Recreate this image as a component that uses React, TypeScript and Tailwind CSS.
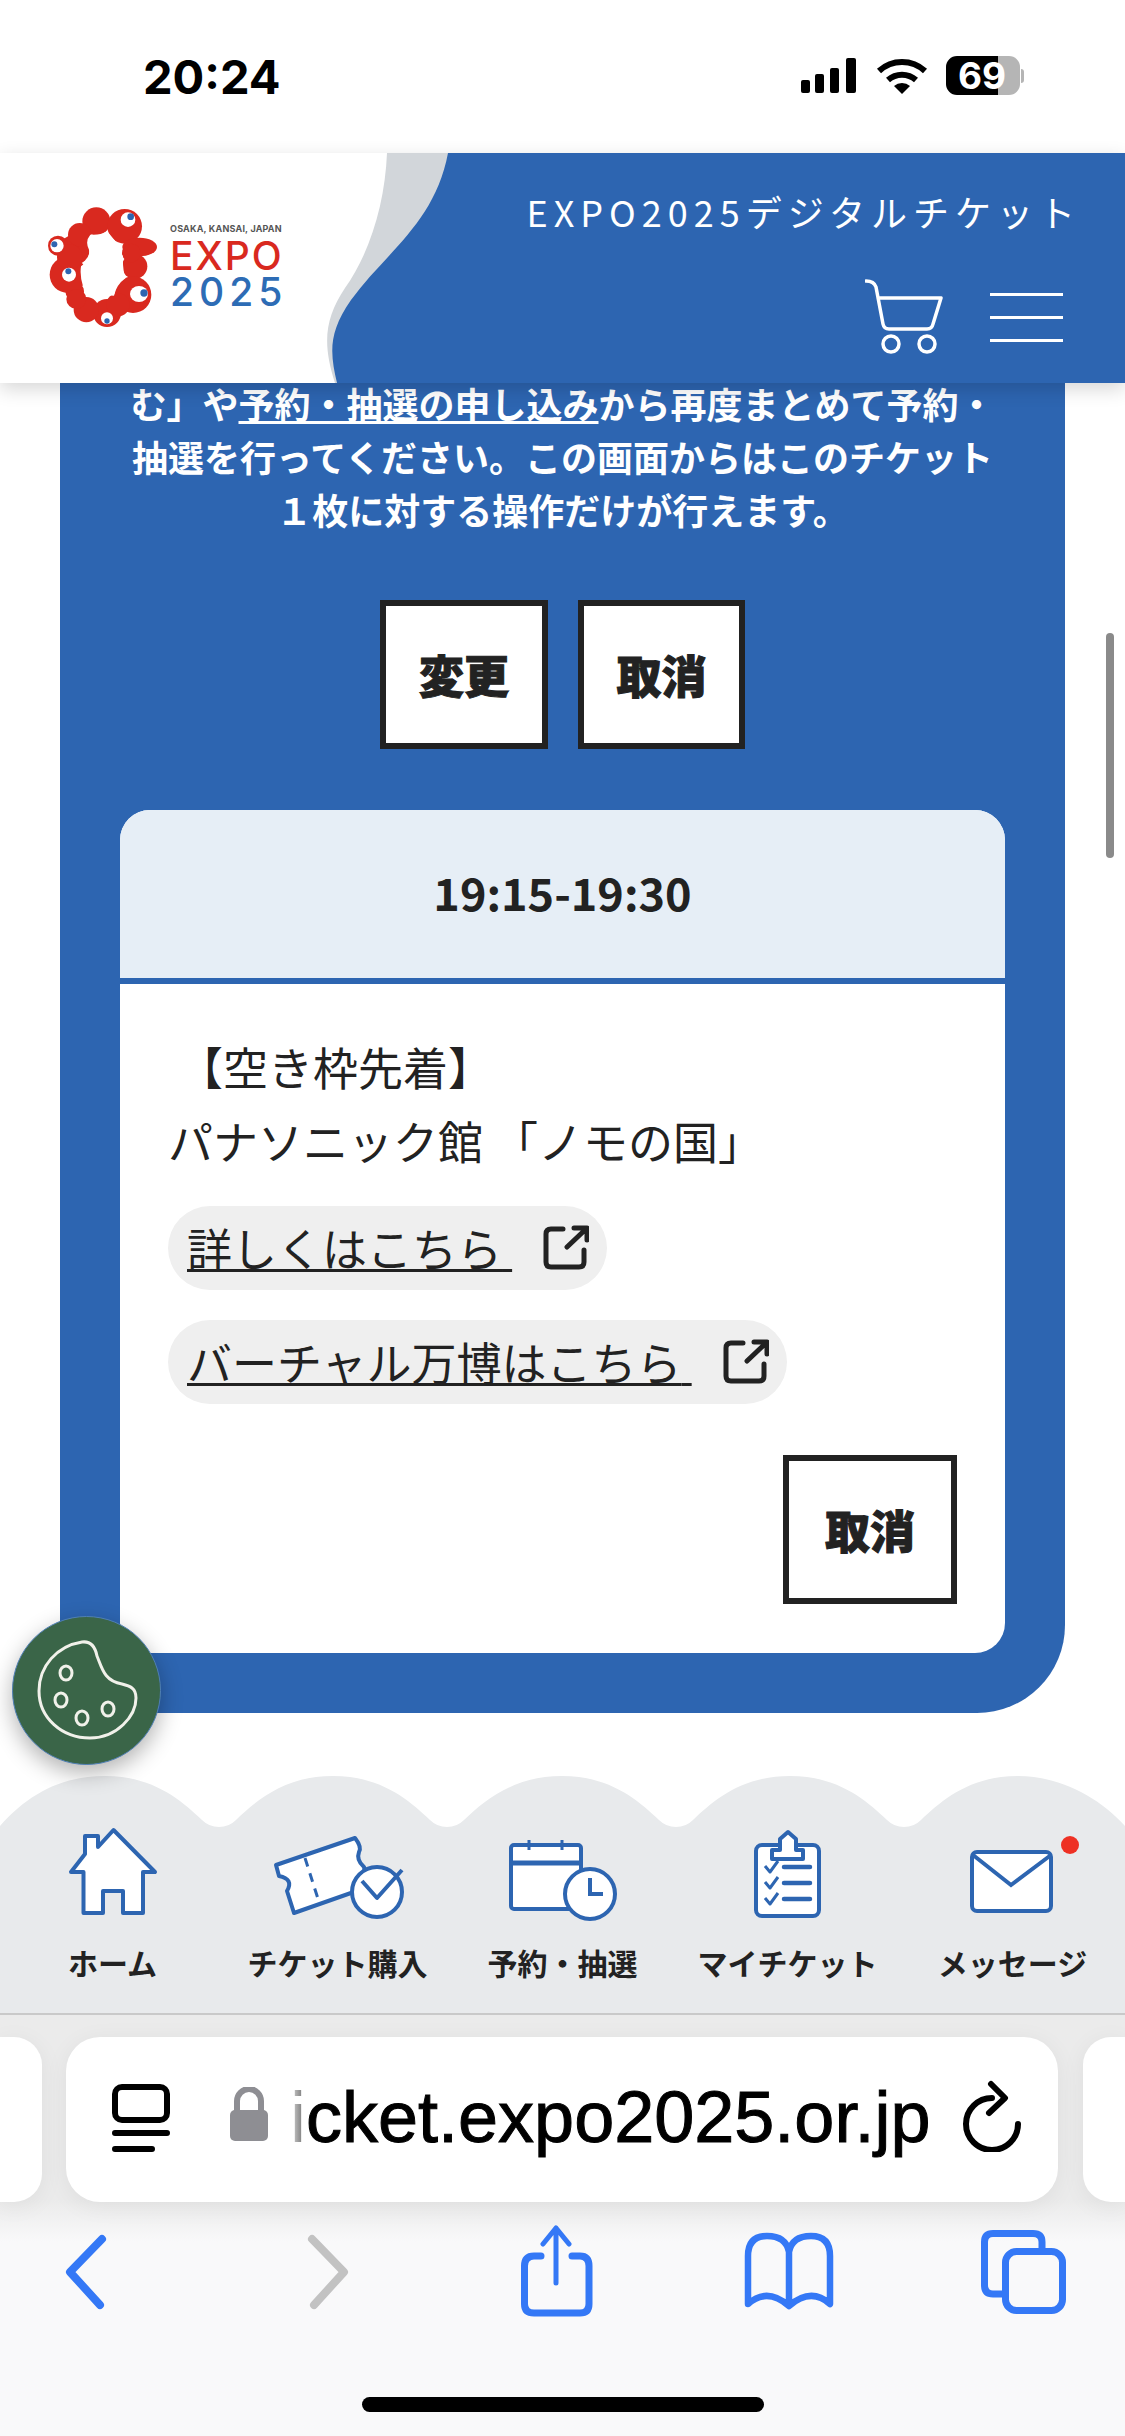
import React from 'react';

const BLUE = '#2d65b1';

const scallopPath = () => {
    const peaks = [105, 333, 562, 790, 1018];
    let d = 'M0 50 C28 18 62 0 105 0 ';
    peaks.forEach((p, i) => {
        const next = peaks[i + 1];
        if (next) {
            d += `C${p + 48} 0 ${p + 76} 24 ${p + 97} 44 Q${p + 104} 51 ${p + 114} 51 Q${p + 124} 51 ${p + 131} 44 C${p + 152} 24 ${next - 48} 0 ${next} 0 `;
        } else {
            d += `C${p + 40} 0 ${p + 80} 20 1125 50 `;
        }
    });
    return d + 'L1125 51 L0 51 Z';
};

const HomeIcon = () => (
    <path d="M75.5 3 L117 45 L105 45 L105 86 L85 86 L85 64 L65 64 L65 86 L45.5 86 L45.5 45 L33 45 L47 27 L47 9 L60 9 L60 20 Z" fill="#fff" stroke={BLUE} strokeWidth="4" strokeLinejoin="round" />
);

const TicketIcon = () => (
    <g fill="none" stroke={BLUE} strokeWidth="4" strokeLinejoin="round">
        <path d="M13 38 L92 11 Q99 20 96 25 Q93 33 101 40 L105 60 L31 86 L24 64 Q31 52 16 49 Z" fill="#fff" />
        <path d="M42 31 L56 75" strokeDasharray="9 7" strokeWidth="3" />
        <circle cx="114" cy="65" r="25" fill="#fff" />
        <path d="M99 54 L114 71 L139 43" />
    </g>
);

const CalendarIcon = () => (
    <g fill="none" stroke={BLUE} strokeWidth="4">
        <rect x="23" y="18" width="70" height="64" rx="3" fill="#fff" />
        <path d="M23 36 H93" strokeWidth="5" />
        <path d="M41 13 V23 M74 13 V23" strokeWidth="3" />
        <circle cx="102" cy="67" r="25" fill="#fff" />
        <path d="M102 51 V67 H115" />
    </g>
);

const ClipboardIcon = () => (
    <g fill="none" stroke={BLUE} strokeWidth="4" strokeLinejoin="round">
        <rect x="43" y="18" width="63" height="71" rx="6" fill="#fff" />
        <path d="M59 23 L67 23 L67 12 L75 5 L83 12 L83 23 L90 23 L90 32 L59 32 Z" fill="#fff" />
        <path d="M52 39 L57 45 L65 34 M52 55 L57 61 L65 50 M52 71 L57 77 L65 66" strokeWidth="3" />
        <path d="M71 40 H97 M71 56 H97 M71 72 H97" strokeWidth="4.5" strokeLinecap="round" />
    </g>
);

const MailIcon = () => (
    <g>
        <rect x="34" y="25" width="79" height="59" rx="5" fill="#fff" stroke={BLUE} strokeWidth="4" />
        <path d="M35 28 L73 58 L113 28" fill="none" stroke={BLUE} strokeWidth="4" />
        <circle cx="132" cy="18" r="9" fill="#ee3124" />
    </g>
);

const navItems = [
    {label: 'ホーム', icon: <HomeIcon />},
    {label: 'チケット購入', icon: <TicketIcon />},
    {label: '予約・抽選', icon: <CalendarIcon />},
    {label: 'マイチケット', icon: <ClipboardIcon />},
    {label: 'メッセージ', icon: <MailIcon />},
];

const ExternalIcon = () => (
    <svg width="46" height="46" viewBox="0 0 46 46" fill="none" stroke="#222" strokeWidth="5" strokeLinecap="round" strokeLinejoin="round" className="shrink-0">
        <path d="M20 4 H8 Q3 4 3 9 V37 Q3 42 8 42 H36 Q41 42 41 37 V25" />
        <path d="M24 22 L43 4 M31 3 H44 V15" />
    </svg>
);

const Logo = () => (
    <svg width="120" height="130" viewBox="70 100 360 390" className="shrink-0">
        <g fill="#d9291f">
            <circle cx="230" cy="155" r="42" />
            <circle cx="315" cy="170" r="52" />
            <ellipse cx="360" cy="232" rx="52" ry="28" />
            <circle cx="345" cy="290" r="38" />
            <circle cx="340" cy="375" r="55" />
            <circle cx="262" cy="430" r="42" />
            <circle cx="200" cy="420" r="38" />
            <circle cx="165" cy="365" r="28" />
            <circle cx="145" cy="315" r="55" />
            <circle cx="165" cy="240" r="45" />
            <circle cx="115" cy="228" r="30" />
            <circle cx="180" cy="195" r="35" />
            <circle cx="150" cy="262" r="38" />
            <circle cx="170" cy="388" r="30" />
            <circle cx="295" cy="405" r="35" />
            <circle cx="335" cy="250" r="28" />
        </g>
        <path d="M212 195 Q240 198 262 184 L296 225 Q290 250 310 258 Q308 300 318 325 Q290 345 283 378 Q255 375 228 388 Q200 380 190 350 Q180 320 184 290 Q212 270 208 240 Q195 215 212 195 Z" fill="#fff" />
        <g fill="#fff">
            <circle cx="325" cy="150" r="22" />
            <circle cx="112" cy="228" r="20" />
            <circle cx="148" cy="315" r="21" />
            <ellipse cx="358" cy="373" rx="27" ry="24" />
            <circle cx="262" cy="446" r="18" />
        </g>
        <g fill="#2d65b1">
            <circle cx="333" cy="141" r="10" />
            <circle cx="104" cy="224" r="9" />
            <circle cx="146" cy="305" r="9" />
            <circle cx="373" cy="370" r="11" />
            <circle cx="262" cy="454" r="8" />
        </g>
    </svg>
);

const StatusBar = () => (
    <div className="h-[153px] bg-white flex items-start">
        <span className="ml-[143px] mt-[50px] font-['Inter',sans-serif] font-bold text-[47px] leading-[54px] text-black">20:24</span>
        <svg width="56" height="36" viewBox="0 0 56 36" className="ml-auto mt-[58px]" fill="#000">
            <rect x="0" y="22" width="9" height="13" rx="2" />
            <rect x="14" y="16" width="9" height="19" rx="2" />
            <rect x="29" y="10" width="9" height="25" rx="2" />
            <rect x="45" y="0" width="10" height="35" rx="2" />
        </svg>
        <svg width="52" height="36" viewBox="0 0 52 36" className="ml-[19px] mt-[58px]" fill="none" stroke="#000" strokeWidth="6">
            <path d="M3 13 A34 34 0 0 1 49 13" />
            <path d="M12 22 A21 21 0 0 1 40 22" />
            <path d="M26 36 L18 28 A12 12 0 0 1 34 28 Z" fill="#000" stroke="none" />
        </svg>
        <div className="ml-[18px] mr-[101px] mt-[56px] flex items-center">
            <div className="w-[74px] h-[39px] rounded-[11px] bg-[linear-gradient(90deg,#000_70%,#b5b5b5_70%)] flex items-center pl-[12px] font-['Inter',sans-serif] font-bold text-[37px] leading-none text-white">69</div>
            <div className="w-[3px] h-[14px] ml-[1px] rounded-r-full bg-[#b5b5b5]" />
        </div>
    </div>
);

const Header = () => (
    <header className="relative z-10 h-[230px] bg-white flex justify-between shadow-[0_6px_18px_rgba(0,0,0,0.16)]">
        <svg width="1125" height="230" viewBox="0 0 1125 230" className="absolute left-0 top-0">
            <path d="M387 0 C385 50 370 100 345 135 C325 165 322 190 335 230 L360 230 L460 0 Z" fill="#d2d6da" />
            <path d="M448 0 L1125 0 L1125 230 L337 230 C330 200 328 180 351 147 C385 100 435 70 448 0 Z" fill={BLUE} />
        </svg>
        <div className="relative flex items-center pl-[43px]">
            <Logo />
            <div className="ml-[7px] flex flex-col font-['Inter',sans-serif] -mt-[4px]">
                <span className="text-[9px] leading-[11px] font-bold text-[#555] whitespace-nowrap tracking-[0.2px]">OSAKA, KANSAI, JAPAN</span>
                <span className="text-[39px] leading-[36px] font-medium text-[#d9291f] tracking-[2px] mt-[4px]">EXPO</span>
                <span className="text-[39px] leading-[36px] font-medium text-[#2d6cb5] tracking-[5px]">2025</span>
            </div>
        </div>
        <div className="relative flex flex-col items-end pr-[50px] pt-[37px]">
            <p className="text-[36px] leading-[42px] tracking-[6px] text-white -mr-[6px] whitespace-nowrap">EXPO2025デジタルチケット</p>
            <div className="flex items-start mt-[46px] mr-[12px]">
                <svg width="80" height="78" viewBox="0 0 80 78" fill="none" stroke="#fff" strokeWidth="3.5" strokeLinecap="round" strokeLinejoin="round">
                    <path d="M1 3 Q9 3 11 9 L18 46 Q19 51 24 51 L62 51 Q67 51 68 46 L76 20 L13 20" />
                    <circle cx="26" cy="66" r="8" />
                    <circle cx="62" cy="66" r="8" />
                </svg>
                <div className="ml-[45px] mt-[15px] flex flex-col gap-[20px]">
                    <div className="w-[73px] h-[3px] bg-white" />
                    <div className="w-[73px] h-[3px] bg-white" />
                    <div className="w-[73px] h-[3px] bg-white" />
                </div>
            </div>
        </div>
    </header>
);

const ActionButton = ({label, className}: {label: string; className: string}) => (
    <button className={`h-[149px] border-[6px] border-[#222] bg-white text-[45px] font-black text-[#222] [-webkit-text-stroke:1px_#222] ${className}`}>{label}</button>
);

const LinkPill = ({label}: {label: string}) => (
    <a className="self-start h-[84px] rounded-full bg-[#efefef] inline-flex items-center pl-[19px] pr-[18px] text-[45px] text-[#222]">
        <span className="underline whitespace-pre decoration-[3px] leading-[60px]">{label} </span>
        <span className="ml-[31px]"><ExternalIcon /></span>
    </a>
);

const Panel = () => (
    <section className="-mt-[6px] mx-[60px] bg-[#2d65b1] rounded-b-[88px] px-[60px] pb-[60px]">
        <p className="text-[36px] leading-[53px] font-bold text-white text-center whitespace-nowrap">
            む」や<span className="underline decoration-[3px]">予約・抽選の申し込み</span>から再度まとめて予約・<br />
            抽選を行ってください。この画面からはこのチケット<br />
            １枚に対する操作だけが行えます。
        </p>
        <div className="mt-[64px] flex justify-center gap-[30px]">
            <ActionButton label="変更" className="w-[168px]" />
            <ActionButton label="取消" className="w-[167px]" />
        </div>
        <div className="mt-[61px] rounded-[30px] overflow-hidden bg-white">
            <div className="h-[168px] bg-[#e6eef6] flex items-center justify-center pb-[5px] text-[45px] font-bold text-[#222]">19:15-19:30</div>
            <div className="h-[6px] bg-[#2d65b1]" />
            <div className="pt-[46px] pl-[48px] pr-[48px] pb-[49px] flex flex-col">
                <p className="text-[45px] leading-[74px] text-[#222] whitespace-pre-wrap">
                    <span className="ml-[10px]">【空き枠先着】</span><br />
                    パナソニック館 「ノモの国」
                </p>
                <div className="mt-[28px] flex flex-col gap-[30px]">
                    <LinkPill label="詳しくはこちら" />
                    <LinkPill label="バーチャル万博はこちら" />
                </div>
                <div className="mt-[51px] flex justify-end">
                    <ActionButton label="取消" className="w-[174px]" />
                </div>
            </div>
        </div>
    </section>
);

const BottomNav = () => (
    <nav>
        <svg width="1125" height="51" viewBox="0 0 1125 51" className="block">
            <path d={scallopPath()} fill="#e8eaec" />
        </svg>
        <div className="h-[186px] bg-[#e8eaec] grid grid-cols-5">
            {navItems.map((item) => (
                <div key={item.label} className="flex flex-col items-center">
                    <svg width="150" height="100" viewBox="0 0 150 100" className="shrink-0">{item.icon}</svg>
                    <span className="mt-[15px] text-[30px] leading-[40px] font-bold text-[#222] whitespace-nowrap">{item.label}</span>
                </div>
            ))}
        </div>
    </nav>
);

const SafariChrome = () => (
    <div className="h-[423px] border-t-2 border-[#c9c9c9] bg-[linear-gradient(180deg,#ebebeb_0%,#ebebeb_44%,#f9f9fa_54%,#f9f9fa_100%)]">
        <div className="mt-[22px] h-[165px] flex">
            <div className="w-[42px] rounded-r-[28px] bg-white shadow-[0_4px_24px_rgba(0,0,0,0.06)]" />
            <div className="ml-[24px] w-[992px] rounded-[34px] bg-white shadow-[0_4px_24px_rgba(0,0,0,0.06)] flex items-center pl-[46px]">
                <svg width="58" height="70" viewBox="0 0 58 70" fill="none" stroke="#000" strokeWidth="6" strokeLinecap="round" className="shrink-0 -mt-[2px]">
                    <rect x="3" y="3" width="52" height="33" rx="7" />
                    <path d="M3 49 H55 M3 65 H40" />
                </svg>
                <svg width="38" height="54" viewBox="0 0 38 54" className="ml-[60px] shrink-0 -mt-[12px]" fill="#8e8e93">
                    <path d="M7 26 V14 A12 12 0 0 1 31 14 V26" fill="none" stroke="#8e8e93" strokeWidth="6" />
                    <rect x="0" y="23" width="38" height="31" rx="5" />
                </svg>
                <span className="ml-[22px] font-['Liberation_Sans',sans-serif] text-[72px] leading-[80px] text-black whitespace-nowrap -mt-[6px]">
                    <span className="bg-gradient-to-r from-[#dddddd] to-[#666666] bg-clip-text text-transparent">i</span>
                    <span className="[-webkit-text-stroke:1px_#000]">cket.expo2025.or.jp</span>
                </span>
                <svg width="60" height="72" viewBox="0 0 60 72" fill="none" stroke="#000" strokeWidth="6" strokeLinecap="round" strokeLinejoin="round" className="ml-[32px] shrink-0 -mt-[8px]">
                    <path d="M30 18 A26 26 0 1 0 56 44" />
                    <path d="M29 4 L43 18 L27 33" />
                </svg>
            </div>
            <div className="ml-[25px] w-[42px] rounded-l-[28px] bg-white shadow-[0_4px_24px_rgba(0,0,0,0.06)]" />
        </div>
        <div className="mt-[20px] h-[100px] flex items-center">
            <svg width="44" height="76" viewBox="0 0 44 76" fill="none" stroke="#3478f6" strokeWidth="8" strokeLinecap="round" strokeLinejoin="round" className="ml-[64px]">
                <path d="M38 5 L6 38 L36 71" />
            </svg>
            <svg width="44" height="76" viewBox="0 0 44 76" fill="none" stroke="#c2c2c2" strokeWidth="8" strokeLinecap="round" strokeLinejoin="round" className="ml-[198px]">
                <path d="M6 5 L38 38 L8 71" />
            </svg>
            <svg width="76" height="94" viewBox="0 0 76 94" fill="none" stroke="#3478f6" strokeLinecap="round" strokeLinejoin="round" className="ml-[169px]">
                <path d="M22 31 H15 Q5.5 31 5.5 41 V79 Q5.5 88 15 88 H61 Q70 88 70 79 V41 Q70 31 61 31 H53" strokeWidth="7" />
                <path d="M37 3 V58 M24 19 L37 3 L50 19" strokeWidth="5" />
            </svg>
            <svg width="94" height="80" viewBox="0 0 94 80" fill="none" stroke="#3478f6" strokeWidth="6.5" strokeLinejoin="round" className="ml-[147px]">
                <path d="M47 20 Q44 4 25 4 Q6 4 6 24 L6 72 Q25 55 47 74 Q69 55 88 72 L88 24 Q88 4 69 4 Q50 4 47 20 V74" />
            </svg>
            <svg width="90" height="88" viewBox="0 0 90 88" fill="none" stroke="#3478f6" strokeWidth="7" className="ml-[143px]">
                <path d="M24 66 H14 Q5.5 66 5.5 57 V14 Q5.5 5.5 14 5.5 H54 Q63 5.5 63 14 V22" />
                <rect x="26.5" y="23.5" width="57" height="59" rx="11" />
            </svg>
        </div>
        <div className="mt-[75px] mx-auto w-[402px] h-[15px] rounded-full bg-black" />
    </div>
);

const App = () => {
    return (
        <div className="relative w-[1125px] h-[2436px] overflow-hidden bg-white font-['Noto_Sans_CJK_JP',sans-serif]">
            <StatusBar />
            <Header />
            <main className="h-[1393px] overflow-hidden">
                <Panel />
            </main>
            <BottomNav />
            <SafariChrome />

            {/* scroll indicator */}
            <div className="absolute left-[1106px] top-[633px] w-[8px] h-[225px] rounded-full bg-[#8a8a8a]" />

            {/* cookie settings button */}
            <button className="absolute left-[12px] top-[1616px] w-[149px] h-[149px] rounded-full bg-[#3a6548] border border-[#4f7fb5] shadow-[0_8px_22px_rgba(0,0,0,0.3)]">
                <svg width="149" height="149" viewBox="0 0 149 149" fill="none" stroke="#f1f1ea" strokeWidth="3" className="absolute -left-px -top-px">
                    <path d="M70 26 C45 30 27 50 27 75 C27 102 50 122 78 122 C105 122 124 100 124 82 C124 72 118 70 110 68 C92 65 90 52 85 40 C83 30 78 25 70 26 Z" />
                    <ellipse cx="54" cy="57" rx="6" ry="7" />
                    <ellipse cx="49" cy="84" rx="6" ry="7" />
                    <ellipse cx="70" cy="102" rx="6" ry="7" />
                    <ellipse cx="96" cy="93" rx="6" ry="7" />
                </svg>
            </button>
        </div>
    );
};

export default App;
